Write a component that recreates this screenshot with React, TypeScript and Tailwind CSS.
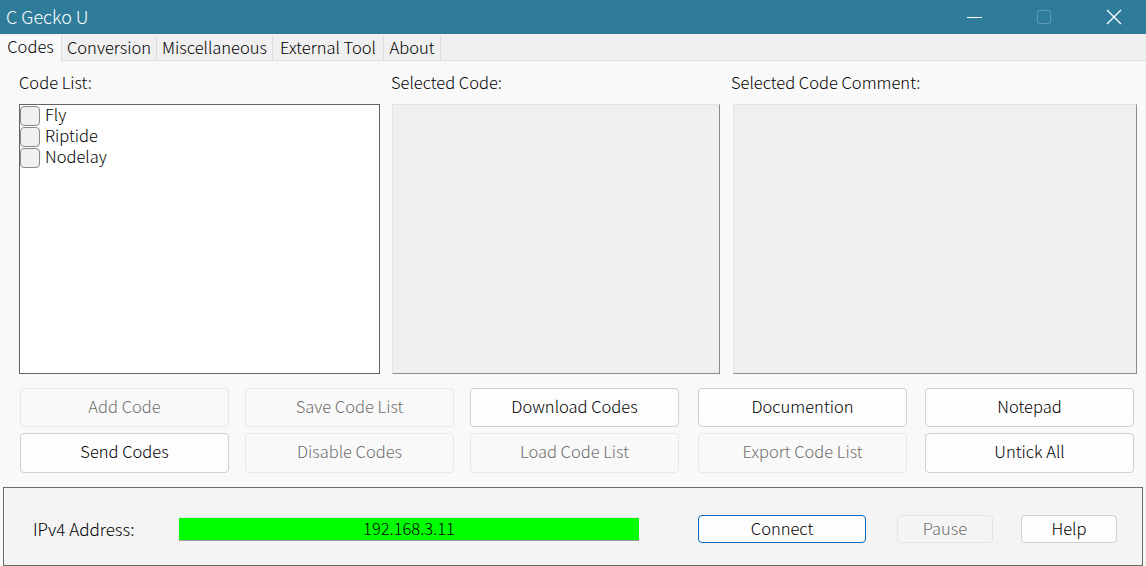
import React from "react";

const font = { fontFamily: '"Noto Sans CJK JP", "Noto Sans", sans-serif' };

function Btn({ label, enabled, className = "" }: { label: string; enabled?: boolean; className?: string }) {
  return (
    <div
      className={
        "flex items-center justify-center rounded-[4px] border text-[16.5px] leading-none pb-[3px] w-[209px] shrink-0 " +
        (enabled
          ? "border-[#d0d0d0] bg-[#fdfdfd] text-black "
          : "border-[#e8e8e8] bg-[#f9f9f9] text-[#6e6e6e] ") +
        className
      }
    >
      {label}
    </div>
  );
}

export default function App() {
  const tabs = ["Conversion", "Miscellaneous", "External Tool", "About"];
  const tabW = [95, 116, 111, 57];
  return (
    <div className="w-[1146px] h-[566px] overflow-hidden bg-[#f9f9f9] flex flex-col font-light" style={font}>
      {/* Title bar */}
      <div className="h-[34px] bg-[#2e7b9a] flex items-center text-white shrink-0">
        <div className="pl-[6px] text-[18px] leading-none flex-1 pb-[2px]">C Gecko U</div>
        <div className="w-[46px] flex justify-center mr-[24px]">
          <div className="w-[15px] h-[1px] bg-white" />
        </div>
        <div className="w-[46px] flex justify-center mr-[24px]">
          <div className="w-[14px] h-[14px] border border-[#5c9ab3] rounded-[2px]" />
        </div>
        <div className="w-[46px] flex justify-center mr-[9px]">
          <svg width="16" height="16" viewBox="0 0 16 16">
            <path d="M1 1 L15 15 M15 1 L1 15" stroke="white" strokeWidth="1.3" />
          </svg>
        </div>
      </div>
      {/* Tab strip */}
      <div className="h-[27px] bg-[#f0f0f0] flex items-end shrink-0 border-b border-[#dedede]">
        <div className="w-[62px] h-[26px] bg-[#f9f9f9] flex items-center justify-center text-[16.5px] leading-none pb-[4px] mb-[-1px] border-r border-[#dedede] relative z-10">
          Codes
        </div>
        {tabs.map((t, i) => (
          <div
            key={t}
            style={{ width: tabW[i] }}
            className="h-[24px] flex items-center justify-center text-[16.5px] leading-none pb-[1px] border-r border-[#dcdcdc] bg-[#f0f0f0]"
          >
            {t}
          </div>
        ))}
      </div>
      {/* Content */}
      <div className="flex-1 flex flex-col">
        <div className="flex pt-[13px] px-[19px] text-[16.5px] leading-none text-black h-[43px]">
          <div className="w-[372px]">Code List:</div>
          <div className="w-[340px]">Selected Code:</div>
          <div>Selected Code Comment:</div>
        </div>
        <div className="flex pl-[19px] h-[270px]">
          <div className="w-[361px] shrink-0 h-[270px] bg-white border border-[#646464] flex flex-col">
            {["Fly", "Riptide", "Nodelay"].map((c) => (
              <div key={c} className="flex items-center h-[21px] text-[16.5px]">
                <div className="w-[20px] h-[20px] shrink-0 rounded-[4px] border border-[#8a8a8a] bg-[#f0f0f0] mr-[5px]" />
                <span className="leading-none pb-[3px]">{c}</span>
              </div>
            ))}
          </div>
          <div className="w-[328px] shrink-0 ml-[12px] h-[270px] bg-[#efefef] border-t border-l border-[#e2e2e2] border-b border-r border-b-[#8c8c8c] border-r-[#8c8c8c]" />
          <div className="w-[404px] shrink-0 ml-[13px] h-[270px] bg-[#efefef] border-t border-l border-[#e2e2e2] border-b border-r border-b-[#8c8c8c] border-r-[#8c8c8c]" />
        </div>
        <div className="flex flex-col gap-y-[6px] pl-[20px] pt-[14px]">
          <div className="flex">
            <Btn label="Add Code" className="h-[39px]" />
            <Btn label="Save Code List" className="h-[39px] ml-[16px]" />
            <Btn label="Download Codes" enabled className="h-[39px] ml-[16px]" />
            <Btn label="Documention" enabled className="h-[39px] ml-[19px]" />
            <Btn label="Notepad" enabled className="h-[39px] ml-[18px]" />
          </div>
          <div className="flex">
            <Btn label="Send Codes" enabled className="h-[40px]" />
            <Btn label="Disable Codes" className="h-[40px] ml-[16px]" />
            <Btn label="Load Code List" className="h-[40px] ml-[16px]" />
            <Btn label="Export Code List" className="h-[40px] ml-[19px]" />
            <Btn label="Untick All" enabled className="h-[40px] ml-[18px]" />
          </div>
        </div>
        <div className="mt-[14px] mx-[3px] flex-1 border border-[#6b6b6b] bg-[#f4f4f4] flex items-start pt-[27px]">
          <div className="w-[144px] pl-[29px] text-[17px] leading-none pb-[2px] h-[28px] flex items-center">IPv4 Address:</div>
          <div className="w-[460px] ml-[31px] mt-[2px] h-[24px] bg-[#00ff00] border-t border-[#e8e8e8] border-b border-b-[#a0a0a0] flex items-center justify-center text-[16.5px] leading-none pb-[2px]">
            192.168.3.11
          </div>
          <div className="ml-[59px] w-[168px] h-[28px] rounded-[4px] border border-[#0067c0] bg-[#fdfdfd] flex items-center justify-center text-[16.5px] leading-none pb-[2px]">
            Connect
          </div>
          <div className="ml-[31px] w-[96px] h-[28px] rounded-[4px] border border-[#e5e5e5] bg-[#f5f5f5] text-[#6e6e6e] flex items-center justify-center text-[16.5px] leading-none pb-[2px]">
            Pause
          </div>
          <div className="ml-[28px] w-[96px] h-[28px] rounded-[4px] border border-[#d0d0d0] bg-[#fdfdfd] flex items-center justify-center text-[16.5px] leading-none pb-[2px]">
            Help
          </div>
        </div>
      </div>
    </div>
  );
}
